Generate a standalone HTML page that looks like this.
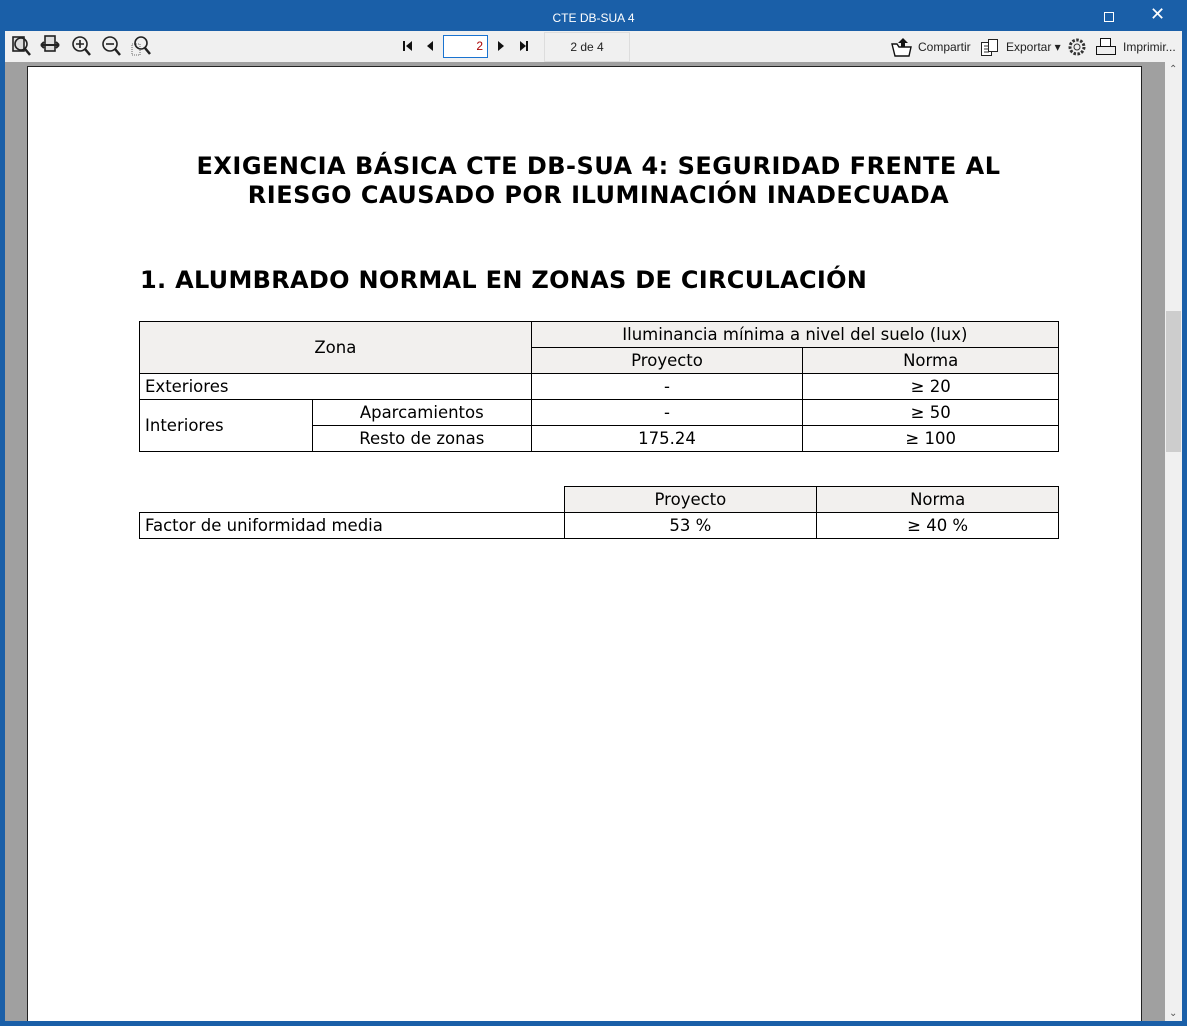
<!DOCTYPE html>
<html><head><meta charset="utf-8"><style>
*{box-sizing:border-box;margin:0;padding:0}
body{width:1187px;height:1026px;overflow:hidden;background:#1a5fa8;font-family:"DejaVu Sans","Liberation Sans",sans-serif;position:relative}
.title{position:absolute;left:0;top:0;width:1187px;height:31px;color:#fff;font:12px "Liberation Sans",sans-serif;text-align:center;line-height:36px}
.tb{position:absolute;left:5px;top:31px;width:1177px;height:31px;background:#f0f0f0;font:12px "Liberation Sans",sans-serif;color:#222}
.gray{position:absolute;left:5px;top:62px;width:1160px;height:959px;background:#a0a0a0}
.page{position:absolute;left:27px;top:66px;width:1115px;height:955px;background:#fff;border:1px solid #222;border-bottom:none}
.sb{position:absolute;left:1165px;top:62px;width:17px;height:959px;background:#f0f0f0}
.thumb{position:absolute;left:1166px;top:311px;width:15px;height:141px;background:#cdcdcd}
h1{position:absolute;left:27px;width:1143px;top:152px;text-align:center;font:bold 24px/29px "DejaVu Sans",sans-serif;letter-spacing:.5px;color:#000}
h2{position:absolute;left:140px;top:266px;font:bold 24px "DejaVu Sans",sans-serif;letter-spacing:.3px;color:#000}
table{position:absolute;border-collapse:collapse;font:16.5px "DejaVu Sans",sans-serif;color:#000}
td{border:1px solid #000;height:26px;padding:0 5px;text-align:center;line-height:24px}
.h{background:#f2f0ee}
.l{text-align:left}
</style></head><body>
<div class="title">CTE DB-SUA 4</div>
<div style="position:absolute;left:1104px;top:12px;width:10px;height:10px;border:1px solid #fff"></div>
<div style="position:absolute;left:1150px;top:4px;color:#fff;font:18px 'DejaVu Sans';">✕</div>
<div class="tb">
<svg width="160" height="31" style="position:absolute;left:3px;top:0">
<g fill="none" stroke="#222" stroke-width="1.6">
<rect x="5" y="6" width="11" height="14" fill="#ddd"/><circle cx="13" cy="13" r="6"/><line x1="17" y1="18" x2="22" y2="24" stroke-width="2.5"/>
<rect x="37" y="5" width="10" height="15" fill="#ddd"/><path d="M33 14h18M33 14l3-3M33 14l3 3M51 14l-3-3M51 14l-3 3" stroke-width="2"/>
<circle cx="72" cy="13" r="7"/><path d="M68 13h8M72 9v8"/><line x1="77" y1="18" x2="82" y2="24" stroke-width="2.5"/>
<circle cx="102" cy="13" r="7"/><path d="M98 13h8"/><line x1="107" y1="18" x2="112" y2="24" stroke-width="2.5"/>
<rect x="124" y="13" width="8" height="11" stroke="#999" stroke-dasharray="1 1"/><circle cx="133" cy="12" r="6"/><line x1="137" y1="17" x2="142" y2="23" stroke-width="2.5"/>
</g></svg>
<svg width="140" height="31" style="position:absolute;left:390px;top:0"><g fill="#111">
<rect x="8" y="10" width="2" height="10"/><path d="M17 10v10l-6-5z"/>
<path d="M38 10v10l-6-5z"/>
<path d="M103 10v10l6-5z"/>
<path d="M125 10v10l6-5z"/><rect x="131" y="10" width="2" height="10"/></g></svg>
<div style="position:absolute;left:438px;top:4px;width:45px;height:23px;background:#fff;border:1px solid #1a73d0;text-align:right;padding-right:4px;line-height:21px;color:#a00">2</div>
<div style="position:absolute;left:539px;top:1px;width:86px;height:30px;border:1px solid #ddd;text-align:center;line-height:28px">2 de 4</div>
<svg width="22" height="22" style="position:absolute;left:885px;top:5px"><path d="M2 8l3 12h14l2-9H9l-2-3z" fill="#fff" stroke="#111" stroke-width="1.4"/><path d="M13 2l5 5h-3v4h-4V7H8z" fill="#111"/></svg>
<span style="position:absolute;left:913px;top:9px">Compartir</span>
<svg width="22" height="22" style="position:absolute;left:974px;top:5px"><g fill="#fff" stroke="#222"><rect x="2.5" y="6.5" width="10" height="13"/><rect x="9.5" y="3.5" width="9" height="12"/></g><path d="M5 10h5M5 13h5M5 16h5" stroke="#333"/></svg>
<span style="position:absolute;left:1001px;top:9px">Exportar ▾</span>
<svg width="22" height="22" style="position:absolute;left:1061px;top:5px"><circle cx="11" cy="11" r="7" fill="none" stroke="#333" stroke-width="3" stroke-dasharray="2.5 1.5"/><circle cx="11" cy="11" r="3" fill="none" stroke="#333"/></svg>
<svg width="22" height="22" style="position:absolute;left:1090px;top:5px"><rect x="5.5" y="2.5" width="10" height="8" fill="#fff" stroke="#111"/><rect x="1.5" y="10.5" width="19" height="8" fill="#eee" stroke="#111"/></svg>
<span style="position:absolute;left:1118px;top:9px;color:#222">Imprimir...</span>
</div>
<div class="gray"></div>
<div class="sb"><div style="position:absolute;left:4px;top:2px;font-size:10px;color:#555">⌃</div><div style="position:absolute;left:4px;bottom:2px;font-size:10px;color:#555">⌄</div></div>
<div class="thumb"></div>
<div class="page"></div>
<h1>EXIGENCIA BÁSICA CTE DB-SUA 4: SEGURIDAD FRENTE AL<br>RIESGO CAUSADO POR ILUMINACIÓN INADECUADA</h1>
<h2>1. ALUMBRADO NORMAL EN ZONAS DE CIRCULACIÓN</h2>
<table style="left:139px;top:321px;width:920px">
<colgroup><col style="width:173px"><col style="width:219px"><col style="width:272px"><col style="width:256px"></colgroup>
<tr><td class="h" colspan="2" rowspan="2">Zona</td><td class="h" colspan="2">Iluminancia mínima a nivel del suelo (lux)</td></tr>
<tr><td class="h">Proyecto</td><td class="h">Norma</td></tr>
<tr><td class="l" colspan="2">Exteriores</td><td>-</td><td>≥ 20</td></tr>
<tr><td class="l" rowspan="2">Interiores</td><td>Aparcamientos</td><td>-</td><td>≥ 50</td></tr>
<tr><td>Resto de zonas</td><td>175.24</td><td>≥ 100</td></tr>
</table>
<table style="left:139px;top:486px;width:920px">
<colgroup><col style="width:425px"><col style="width:253px"><col style="width:242px"></colgroup>
<tr><td style="border:none;border-bottom:1px solid #000"></td><td class="h">Proyecto</td><td class="h">Norma</td></tr>
<tr><td class="l">Factor de uniformidad media</td><td>53 %</td><td>≥ 40 %</td></tr>
</table>
</body></html>
